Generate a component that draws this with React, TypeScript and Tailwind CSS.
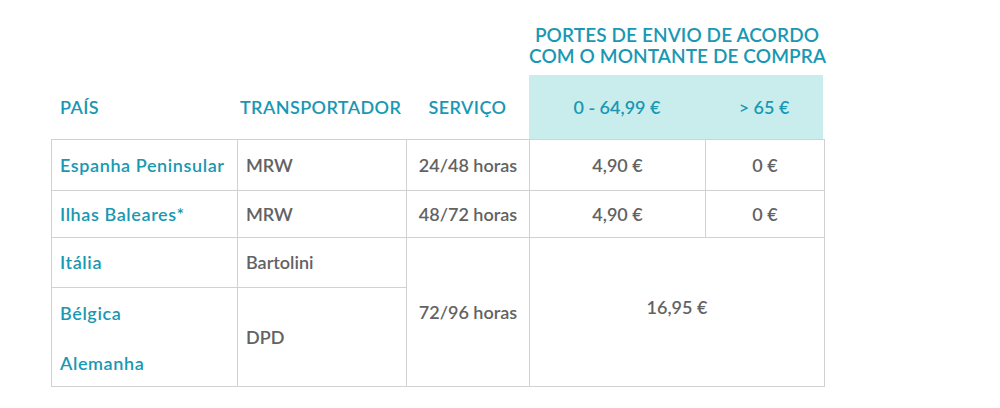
import React from "react";

const teal = "text-[#1898b3] tracking-[0.6px]";
const gray = "text-[#626262]";

export default function App() {
  return (
    <div className="w-[1000px] h-[408px] bg-white font-['Lato',_'Liberation_Sans',_sans-serif] font-semibold">
      <div className="pl-[51px] pt-[24px]">
        {/* title */}
        <div className="ml-[478px] w-[296px] text-center text-[19px] leading-[21px] tracking-[0.1px] text-[#1898b3] whitespace-nowrap">
          <div>PORTES DE ENVIO DE ACORDO</div>
          <div>COM O MONTANTE DE COMPRA</div>
        </div>
        {/* header */}
        <div className="mt-[9px] grid grid-cols-[186px_169px_123px_176px_119px] h-[64px] text-[18px] text-[#1898b3]">
          <div className="flex items-center pl-[9px] tracking-[0.4px]">PAÍS</div>
          <div className="flex items-center pl-[3px] whitespace-nowrap tracking-[0.4px]">TRANSPORTADOR</div>
          <div className="flex items-center justify-center tracking-[0.4px]">SERVIÇO</div>
          <div className="flex items-center justify-center bg-[#c9eded]">0 - 64,99 €</div>
          <div className="flex items-center justify-center bg-[#c9eded] w-[118px]">&gt; 65 €</div>
        </div>
        {/* body */}
        <div className="grid w-[774px] grid-cols-[185px_168px_122px_175px_118px] grid-rows-[50px_46px_49px_98px] gap-px p-px bg-[#d2d2d2] text-[18px]">
          <div className={`bg-white flex items-center pl-[8px] whitespace-nowrap ${teal}`}>Espanha Peninsular</div>
          <div className={`bg-white flex items-center pl-[8px] ${gray}`}>MRW</div>
          <div className={`bg-white flex items-center justify-center ${gray}`}>24/48 horas</div>
          <div className={`bg-white flex items-center justify-center ${gray}`}>4,90 €</div>
          <div className={`bg-white flex items-center justify-center ${gray}`}>0 €</div>

          <div className={`bg-white flex items-center pl-[8px] ${teal}`}>Ilhas Baleares*</div>
          <div className={`bg-white flex items-center pl-[8px] ${gray}`}>MRW</div>
          <div className={`bg-white flex items-center justify-center ${gray}`}>48/72 horas</div>
          <div className={`bg-white flex items-center justify-center ${gray}`}>4,90 €</div>
          <div className={`bg-white flex items-center justify-center ${gray}`}>0 €</div>

          <div className={`bg-white flex items-center pl-[8px] ${teal}`}>Itália</div>
          <div className={`bg-white flex items-center pl-[8px] ${gray}`}>Bartolini</div>
          <div className={`bg-white row-span-2 flex items-center justify-center ${gray}`}>72/96 horas</div>
          <div className={`bg-white row-span-2 col-span-2 flex items-center justify-center pb-[10px] ${gray}`}>16,95 €</div>

          <div className={`bg-white flex flex-col justify-center gap-[23px] pl-[8px] pt-[2px] ${teal}`}>
            <div>Bélgica</div>
            <div>Alemanha</div>
          </div>
          <div className={`bg-white flex items-center pl-[8px] ${gray}`}>DPD</div>
        </div>
      </div>
    </div>
  );
}
